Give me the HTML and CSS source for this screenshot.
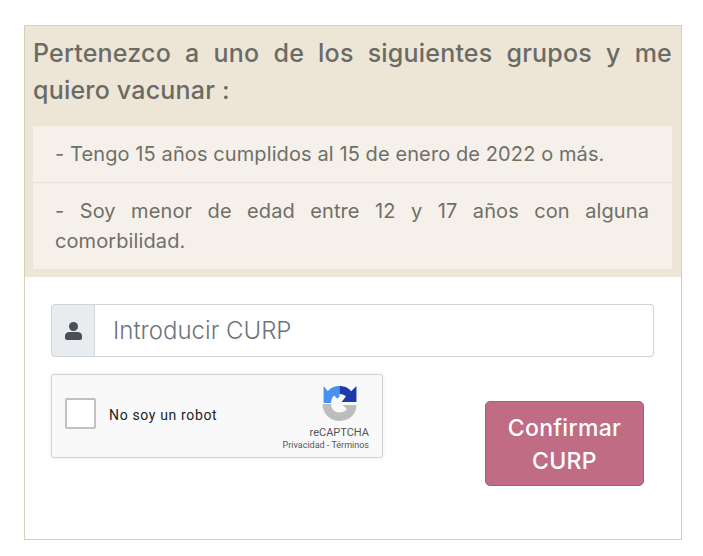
FILE: index.html
```html
<!DOCTYPE html>
<html>
<head>
    <title>Registro de vacunación</title>
    <link rel="stylesheet" href="styles.css">
</head>
<body>
    <div class="card">
        <div class="card-header">
            <h4 class="card-title">Pertenezco a uno de los siguientes grupos y me quiero vacunar :</h4>
            <ul class="group-list">
                <li class="group-item">- Tengo 15 años cumplidos al 15 de enero de 2022 o más.</li>
                <li class="group-item">- Soy menor de edad entre 12 y 17 años con alguna comorbilidad.</li>
            </ul>
        </div>
        <div class="card-body">
            <div class="input-group">
                <span class="input-icon">
                    <svg width="17" height="18" viewBox="0 0 17 18"><circle cx="8.500" cy="4.500" r="4.500" fill="#495057"/><path d="M0 16V14c0-2.800 2-4 4.500-4h8c2.500 0 4.500 1.200 4.500 4v2c0 1.200-.8 2-2 2H2c-1.200 0-2-.8-2-2z" fill="#495057"/></svg>
                </span>
                <input class="curp-input" type="text" placeholder="Introducir CURP">
            </div>
            <div class="form-row">
                <div class="recaptcha">
                    <span class="recaptcha-check"></span>
                    <span class="recaptcha-label">No soy un robot</span>
                    <div class="recaptcha-brand">
                        <svg class="recaptcha-logo" width="35" height="35" viewBox="1 1 32 33">
                            <path d="M17 1C12 1 8 3 6 6L2 1V17H9C9 14 10 12 12 10L15 13L17 11Z" fill="#4a90f0"/>
                            <path d="M17 1C22 1 26 3 28 6L33 1V16H19L23 11C22 9.500 20 8.500 17 8.500Z" fill="#1c3aa9"/>
                            <path d="M1 18H9C9 22 12 26 17 26C20 26 22 25 24 23L20 19H33C33 28 26 34 17 34C8 34 1 27 1 18Z" fill="#bdbdbd"/>
                        </svg>
                        <div class="recaptcha-name">reCAPTCHA</div>
                        <div class="recaptcha-links">Privacidad - Términos</div>
                    </div>
                </div>
                <button class="confirm-btn">Confirmar CURP</button>
            </div>
        </div>
    </div>
</body>
</html>
```

FILE: styles.css
```css
body {
    margin: 0;
    padding: 25px 21px 16px 24px;
    background-color: #fff;
    font-family: Inter, "Open Sans", sans-serif;
}

.card {
    height: 515px;
    box-sizing: border-box;
    border: 1px solid #d6d2ad;
}

.card-header {
    background-color: #ede6d7;
    padding: 9px 9px 9px 8px;
    height: 251px;
    box-sizing: border-box;
}

.card-title {
    margin: 0;
    font-size: 25px;
    font-weight: 500;
    letter-spacing: 0.2px;
    line-height: 37px;
    color: #6b6b66;
    text-align: justify;
}

.group-list {
    list-style: none;
    margin: 17px 0 0;
    padding: 0;
    background-color: #f5f1ea;
}

.group-item {
    padding: 13px 23px 13px 22px;
    font-size: 20px;
    letter-spacing: 0.1px;
    line-height: 30px;
    color: #6f6f69;
    text-align: justify;
}

.group-item + .group-item {
    border-top: 1px solid #e6e2da;
}

.card-body {
    padding: 27px 27px 0 26px;
}

.input-group {
    display: flex;
    height: 53px;
}

.input-icon {
    display: flex;
    align-items: center;
    justify-content: center;
    width: 42px;
    background-color: #e9ecef;
    border: 1px solid #ced4da;
    border-radius: 4px 0 0 4px;
}

.curp-input {
    flex: 1;
    min-width: 0;
    padding: 0 18px;
    border: 1px solid #ced4da;
    border-left: none;
    border-radius: 0 4px 4px 0;
    font-family: inherit;
    font-size: 24px;
    font-weight: 300;
    color: #495057;
    outline: none;
}

.curp-input::placeholder {
    color: #6c757d;
    opacity: 1;
}

.form-row {
    display: flex;
    justify-content: space-between;
    margin-top: 17px;
    padding-right: 10px;
}

.recaptcha {
    display: flex;
    align-items: flex-start;
    width: 332px;
    height: 84px;
    box-sizing: border-box;
    background-color: #f9f9f9;
    border: 1px solid #d3d3d3;
    border-radius: 3px;
    box-shadow: 0 0 4px 1px rgba(0,0,0,0.05);
    font-family: Roboto, sans-serif;
}

.recaptcha-check {
    width: 31px;
    height: 31px;
    box-sizing: border-box;
    margin: 23px 0 0 13px;
    background-color: #fff;
    border: 2px solid #c1c1c1;
    border-radius: 2px;
}

.recaptcha-label {
    margin: 25px 0 0 13px;
    font-size: 14px;
    letter-spacing: 0.65px;
    line-height: 31px;
    color: #222;
}

.recaptcha-brand {
    margin: 11px 13px 0 auto;
    display: flex;
    flex-direction: column;
    align-items: flex-end;
}

.recaptcha-logo {
    margin-right: 12px;
    margin-bottom: 5px;
}

.recaptcha-name {
    font-size: 11px;
    line-height: 13px;
    color: #555;
}

.recaptcha-links {
    font-size: 9px;
    line-height: 12px;
    color: #555;
}

.confirm-btn {
    width: 159px;
    height: 85px;
    margin-top: 27px;
    padding: 2px 12px 0;
    background-color: #c06c84;
    border: 1px solid #a85f75;
    border-radius: 5px;
    color: #fff;
    font-family: inherit;
    font-size: 23px;
    font-weight: 500;
    letter-spacing: 0.3px;
    line-height: 33px;
}
```
